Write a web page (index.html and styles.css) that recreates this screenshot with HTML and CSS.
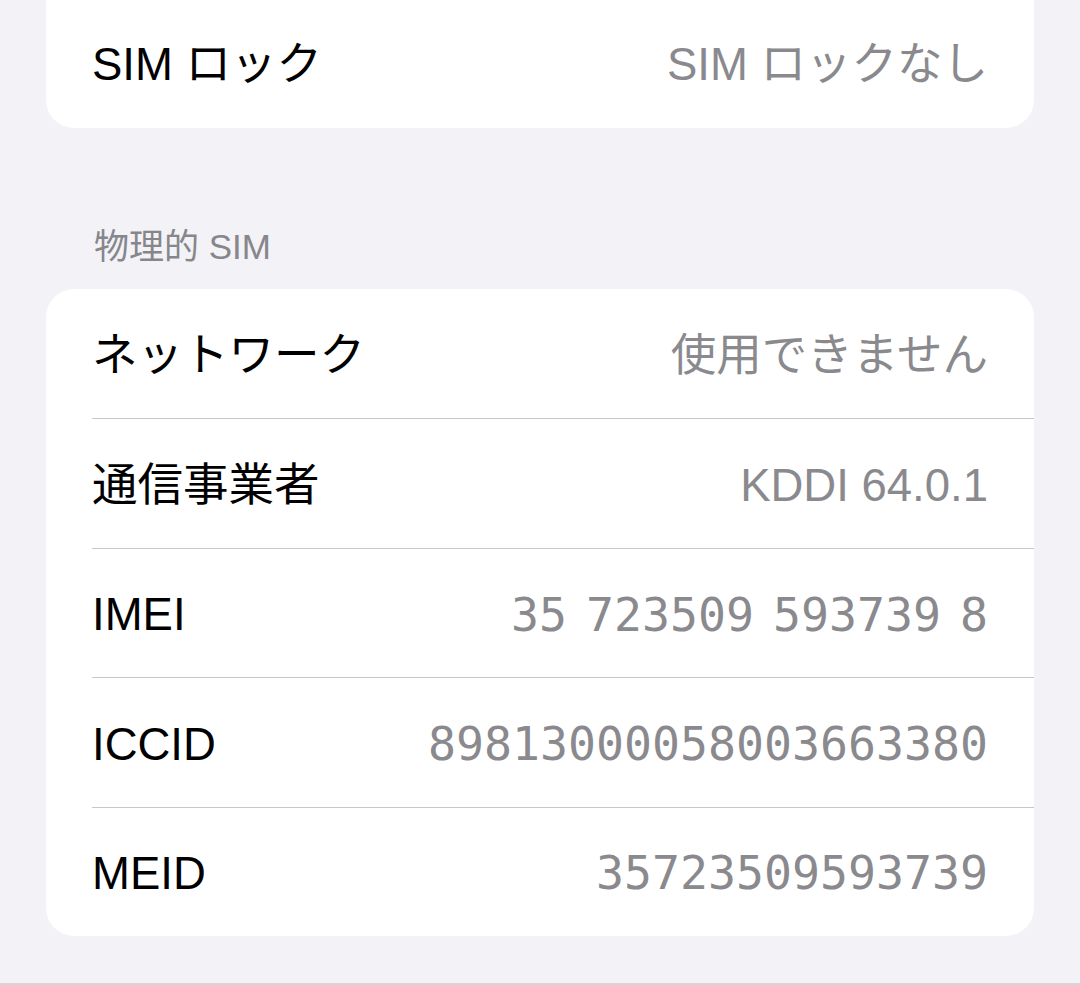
FILE: index.html
```html
<!DOCTYPE html>
<html lang="ja">
<head>
<meta charset="utf-8">
<title>SIM</title>
<link rel="stylesheet" href="styles.css">
</head>
<body>
<main class="screen">
  <section class="group group-top">
    <div class="row">
      <span class="label">SIM ロック</span>
      <span class="value">SIM ロックなし</span>
    </div>
  </section>

  <h2 class="section-header">物理的 SIM</h2>

  <section class="group">
    <div class="row">
      <span class="label">ネットワーク</span>
      <span class="value">使用できません</span>
    </div>
    <div class="row">
      <span class="label">通信事業者</span>
      <span class="value">KDDI 64.0.1</span>
    </div>
    <div class="row">
      <span class="label">IMEI</span>
      <span class="value mono spaced">35 723509 593739 8</span>
    </div>
    <div class="row">
      <span class="label">ICCID</span>
      <span class="value mono">89813000058003663380</span>
    </div>
    <div class="row">
      <span class="label">MEID</span>
      <span class="value mono">35723509593739</span>
    </div>
  </section>

  <div class="bottom-line"></div>
</main>
</body>
</html>
```

FILE: styles.css
```css
html, body {
  margin: 0;
  padding: 0;
}

body {
  background: #f2f2f7;
  width: 1080px;
  height: 985px;
  overflow: hidden;
  font-family: "Liberation Sans", "Noto Sans CJK JP", sans-serif;
  -webkit-font-smoothing: antialiased;
}

.screen {
  display: flex;
  flex-direction: column;
  height: 985px;
}

.group {
  margin: 0 46px;
  background: #ffffff;
  border-radius: 28px;
  display: flex;
  flex-direction: column;
}

.group-top {
  margin-top: -2px;
  border-top-left-radius: 0;
  border-top-right-radius: 0;
}

.row {
  box-sizing: border-box;
  height: 129.4px;
  margin-left: 46px;
  padding: 5px 46px 0 0;
  display: flex;
  align-items: center;
  justify-content: space-between;
  border-top: 1px solid #c8c8cc;
}

.row:first-child {
  border-top: none;
}

.group-top .row {
  height: 130px;
}

.label {
  font-size: 45.5px;
  line-height: 1.2;
  color: #000000;
  white-space: nowrap;
}

.value {
  font-size: 45.5px;
  line-height: 1.2;
  color: #8a8a8e;
  white-space: nowrap;
}

.mono {
  font-family: "DejaVu Sans Mono", "Liberation Mono", monospace;
  font-size: 46.5px;
  color: #8a8a8e;
}

.spaced {
  word-spacing: -9px;
}

.section-header {
  margin: 0;
  padding: 97px 46px 20px 94px;
  font-size: 35px;
  line-height: 44px;
  font-weight: 400;
  color: #86868b;
}

.bottom-line {
  margin-top: auto;
  height: 2px;
  background: #d6d6da;
}
```
